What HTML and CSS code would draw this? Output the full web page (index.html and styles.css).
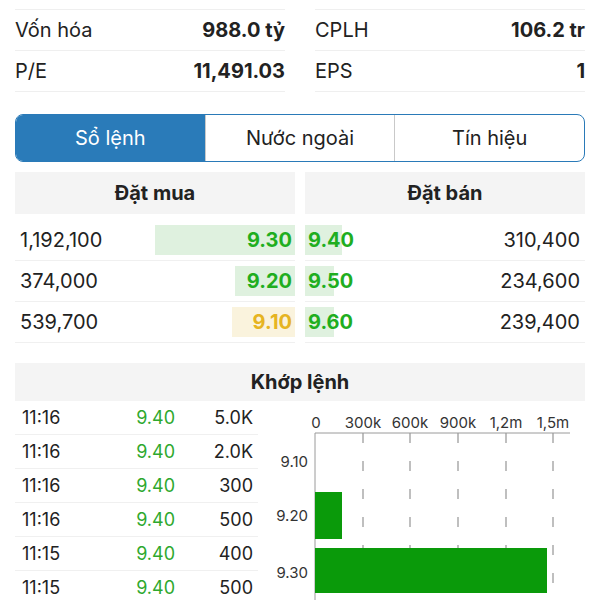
FILE: index.html
```html
<!DOCTYPE html>
<html lang="vi">
<head>
  <meta charset="UTF-8">
  <title>Sổ lệnh</title>
  <link rel="stylesheet" href="styles.css">
</head>
<body>

  <!-- chỉ số cơ bản (hàng đầu bị cuộn khuất) -->
  <div class="stats">
    <div class="stats-col">
      <div class="stat-row"></div>
      <div class="stat-row"><span>Vốn hóa</span><b>988.0 tỷ</b></div>
      <div class="stat-row"><span>P/E</span><b>11,491.03</b></div>
    </div>
    <div class="stats-col">
      <div class="stat-row"></div>
      <div class="stat-row"><span>CPLH</span><b>106.2 tr</b></div>
      <div class="stat-row"><span>EPS</span><b>1</b></div>
    </div>
  </div>

  <!-- tabs -->
  <div class="tabs">
    <div class="tab active">Sổ lệnh</div>
    <div class="tab">Nước ngoài</div>
    <div class="tab">Tín hiệu</div>
  </div>

  <!-- sổ lệnh -->
  <div class="book">
    <div class="book-side">
      <div class="book-head">Đặt mua</div>
      <div class="book-row"><span>1,192,100</span><span class="px up" style="width:140px">9.30</span></div>
      <div class="book-row"><span>374,000</span><span class="px up" style="width:60px">9.20</span></div>
      <div class="book-row"><span>539,700</span><span class="px ref" style="width:63px">9.10</span></div>
    </div>
    <div class="book-side sell">
      <div class="book-head">Đặt bán</div>
      <div class="book-row"><span class="px up" style="width:37px">9.40</span><span>310,400</span></div>
      <div class="book-row"><span class="px up" style="width:29px">9.50</span><span>234,600</span></div>
      <div class="book-row"><span class="px up" style="width:29px">9.60</span><span>239,400</span></div>
    </div>
  </div>

  <!-- khớp lệnh -->
  <div class="match">
    <div class="match-head">Khớp lệnh</div>
    <div class="match-body">
      <div class="trades">
        <div class="trade"><span class="t">11:16</span><span class="p">9.40</span><span class="v">5.0K</span></div>
        <div class="trade"><span class="t">11:16</span><span class="p">9.40</span><span class="v">2.0K</span></div>
        <div class="trade"><span class="t">11:16</span><span class="p">9.40</span><span class="v">300</span></div>
        <div class="trade"><span class="t">11:16</span><span class="p">9.40</span><span class="v">500</span></div>
        <div class="trade"><span class="t">11:15</span><span class="p">9.40</span><span class="v">400</span></div>
        <div class="trade"><span class="t">11:15</span><span class="p">9.40</span><span class="v">500</span></div>
      </div>

      <svg class="chart" width="327" height="200" viewBox="0 0 327 200">
        <g class="ax-label" text-anchor="middle">
          <text x="58" y="27">0</text>
          <text x="105" y="27">300k</text>
          <text x="152" y="27">600k</text>
          <text x="200" y="27">900k</text>
          <text x="248" y="27">1,2m</text>
          <text x="295" y="27">1,5m</text>
        </g>
        <g class="grid">
          <line x1="105" y1="32" x2="105" y2="200"/>
          <line x1="152" y1="32" x2="152" y2="200"/>
          <line x1="200" y1="32" x2="200" y2="200"/>
          <line x1="248" y1="32" x2="248" y2="200"/>
          <line x1="295" y1="32" x2="295" y2="200"/>
        </g>
        <line class="axis" x1="57" y1="32" x2="312" y2="32"/>
        <line class="axis" x1="57" y1="32" x2="57" y2="200"/>
        <rect class="bar" x="57" y="91" width="27" height="47"/>
        <rect class="bar" x="57" y="147" width="232" height="45"/>
        <g class="ax-label" text-anchor="end">
          <text x="50" y="66">9.10</text>
          <text x="50" y="120">9.20</text>
          <text x="50" y="177">9.30</text>
        </g>
      </svg>
    </div>
  </div>

</body>
</html>
```

FILE: styles.css
```css
body { margin: 0; font-family: Inter, "Liberation Sans", sans-serif; color: #222; background: #fff; overflow: hidden; }

.stats { display: grid; grid-template-columns: 1fr 1fr; column-gap: 30px; padding: 0 15px; margin-top: -31px; }
.stat-row { display: flex; justify-content: space-between; align-items: center; height: 40px; border-bottom: 1px solid #efefef; font-size: 20px; }
.stat-row b { font-weight: 700; }

.tabs { display: flex; margin: 22px 15px 0; height: 48px; box-sizing: border-box; border: 1.5px solid #2a7ab8; border-radius: 8px; overflow: hidden; }
.tab { flex: 1; display: flex; align-items: center; justify-content: center; font-size: 20px; border-left: 1px solid #c9c9c9; }
.tab:first-child { border-left: none; }
.tab.active { background: #2a7bb9; color: #fff; }

.book { display: grid; grid-template-columns: 1fr 1fr; column-gap: 10px; padding: 0 15px; margin-top: 10px; }
.book-head { height: 42px; display: flex; align-items: center; justify-content: center; background: #f4f4f4; font-weight: 700; font-size: 20px; margin-bottom: 6px; }
.book-row { display: flex; justify-content: space-between; align-items: center; height: 40px; border-bottom: 1px solid #f0f0f0; font-size: 20px; padding-left: 5px; }
.sell .book-row { padding-left: 0; padding-right: 5px; }
.px { display: inline-block; height: 30px; line-height: 30px; font-weight: 700; text-align: right; padding-right: 3px; box-sizing: border-box; white-space: nowrap; }
.sell .px { text-align: left; padding: 0 0 0 3px; }
.px.up { color: #1fae1f; background: #dff1df; }
.px.ref { color: #e6b422; background: #faf3dd; }

.match { margin: 20px 15px 0; }
.match-head { height: 38px; display: flex; align-items: center; justify-content: center; background: #f4f4f4; font-weight: 700; font-size: 20px; }
.match-body { display: flex; }
.trades { width: 243px; flex: none; }
.trade { display: flex; align-items: center; height: 34px; border-bottom: 1px solid #f0f0f0; font-size: 18px; box-sizing: border-box; }
.trade .t { width: 98px; padding-left: 7px; }
.trade .p { width: 55px; text-align: right; color: #2ea82e; }
.trade .v { width: 78px; text-align: right; }

.chart { display: block; flex: none; }
.ax-label { font-family: Inter, "Liberation Sans", sans-serif; font-size: 15px; fill: #333; }
.axis { stroke: #9a9a9a; stroke-width: 1; }
.grid line { stroke: #aaa; stroke-width: 1.5; stroke-dasharray: 10 18; }
.bar { fill: #0a9a0a; }
```
